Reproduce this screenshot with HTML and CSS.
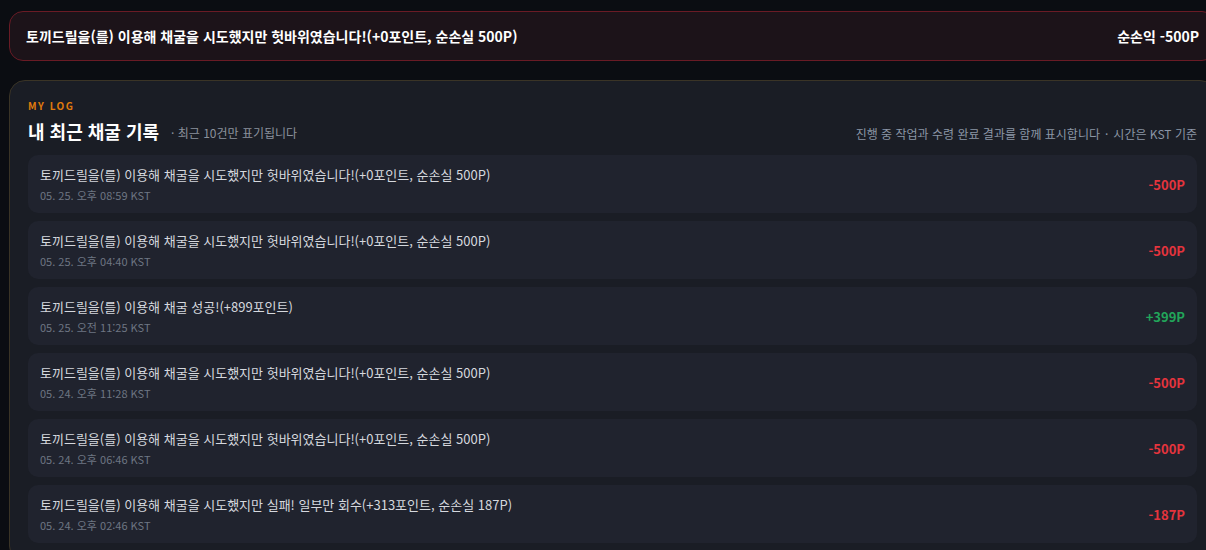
FILE: index.html
```html
<!DOCTYPE html>
<html lang="ko">
<head>
<meta charset="utf-8">
<title>내 최근 채굴 기록</title>
<link rel="stylesheet" href="styles.css">
</head>
<body>
<div class="page">
  <div class="alert">
    <span class="alert-msg">토끼드릴을(를) 이용해 채굴을 시도했지만 헛바위였습니다!(+0포인트, 순손실 500P)</span>
    <span class="alert-net">순손익 -500P</span>
  </div>
  <section class="panel">
    <div class="eyebrow">MY LOG</div>
    <div class="header">
      <div class="header-left">
        <h2 class="title">내 최근 채굴 기록</h2>
        <span class="sub">· 최근 10건만 표기됩니다</span>
      </div>
      <div class="header-right">진행 중 작업과 수령 완료 결과를 함께 표시합니다<span class="dot">·</span>시간은 KST 기준</div>
    </div>
    <ul class="logs">
      <li class="log"><div class="log-body"><div class="log-msg">토끼드릴을(를) 이용해 채굴을 시도했지만 헛바위였습니다!(+0포인트, 순손실 500P)</div><div class="log-date">05. 25. 오후 08:59 KST</div></div><div class="amt neg">-500P</div></li>
      <li class="log"><div class="log-body"><div class="log-msg">토끼드릴을(를) 이용해 채굴을 시도했지만 헛바위였습니다!(+0포인트, 순손실 500P)</div><div class="log-date">05. 25. 오후 04:40 KST</div></div><div class="amt neg">-500P</div></li>
      <li class="log"><div class="log-body"><div class="log-msg">토끼드릴을(를) 이용해 채굴 성공!(+899포인트)</div><div class="log-date">05. 25. 오전 11:25 KST</div></div><div class="amt pos">+399P</div></li>
      <li class="log"><div class="log-body"><div class="log-msg">토끼드릴을(를) 이용해 채굴을 시도했지만 헛바위였습니다!(+0포인트, 순손실 500P)</div><div class="log-date">05. 24. 오후 11:28 KST</div></div><div class="amt neg">-500P</div></li>
      <li class="log"><div class="log-body"><div class="log-msg">토끼드릴을(를) 이용해 채굴을 시도했지만 헛바위였습니다!(+0포인트, 순손실 500P)</div><div class="log-date">05. 24. 오후 06:46 KST</div></div><div class="amt neg">-500P</div></li>
      <li class="log"><div class="log-body"><div class="log-msg">토끼드릴을(를) 이용해 채굴을 시도했지만 실패! 일부만 회수(+313포인트, 순손실 187P)</div><div class="log-date">05. 24. 오후 02:46 KST</div></div><div class="amt neg">-187P</div></li>
    </ul>
  </section>
</div>
</body>
</html>
```
FILE: styles.css
```css
html, body {
  margin: 0;
  padding: 0;
  background: #0b0d12;
  overflow: hidden;
}
body {
  font-family: "Noto Sans CJK KR", "Noto Sans", sans-serif;
  color: #d5d8de;
}
.page {
  width: 1207px;
  padding: 11px 0 0 9px;
}
.alert {
  height: 50px;
  box-sizing: border-box;
  border: 1px solid #6a1b25;
  border-radius: 14px;
  background: #1c1319;
  padding: 0 16px;
  display: flex;
  align-items: center;
  justify-content: space-between;
  font-size: 14px;
  font-weight: 700;
  color: #ffffff;
  margin-bottom: 19px;
}
.panel {
  border: 1px solid #3a3426;
  border-radius: 16px;
  background: #1a1d25;
  padding: 18px 18px 18px 18px;
}
.eyebrow {
  font-size: 10px;
  line-height: 14px;
  font-weight: 700;
  letter-spacing: 1.5px;
  color: #e07b0c;
  margin-bottom: 6px;
}
.header {
  display: flex;
  justify-content: space-between;
  align-items: flex-end;
  margin-bottom: 12px;
}
.header-left {
  display: flex;
  align-items: center;
  gap: 12px;
}
.title {
  margin: 0;
  font-size: 18px;
  line-height: 24px;
  font-weight: 700;
  color: #ffffff;
}
.sub {
  font-size: 12px;
  color: #8a919c;
  position: relative;
  top: 1px;
}
.header-right {
  font-size: 12px;
  line-height: 16px;
  color: #8b96a6;
  padding-bottom: 1px;
}
.dot {
  margin: 0 5px;
}
.logs {
  list-style: none;
  margin: 0;
  padding: 0;
  display: flex;
  flex-direction: column;
  gap: 8px;
}
.log {
  display: flex;
  align-items: center;
  justify-content: space-between;
  background: #20232e;
  border-radius: 10px;
  padding: 10px 12px 10px 12px;
}
.log-msg {
  font-size: 13px;
  line-height: 20px;
  color: #d5d8de;
}
.log-date {
  font-size: 11px;
  line-height: 16px;
  color: #6e7683;
  margin-top: 2px;
}
.amt {
  font-size: 13px;
  font-weight: 700;
}
.neg { color: #e5343d; }
.pos { color: #22a55a; }
```
